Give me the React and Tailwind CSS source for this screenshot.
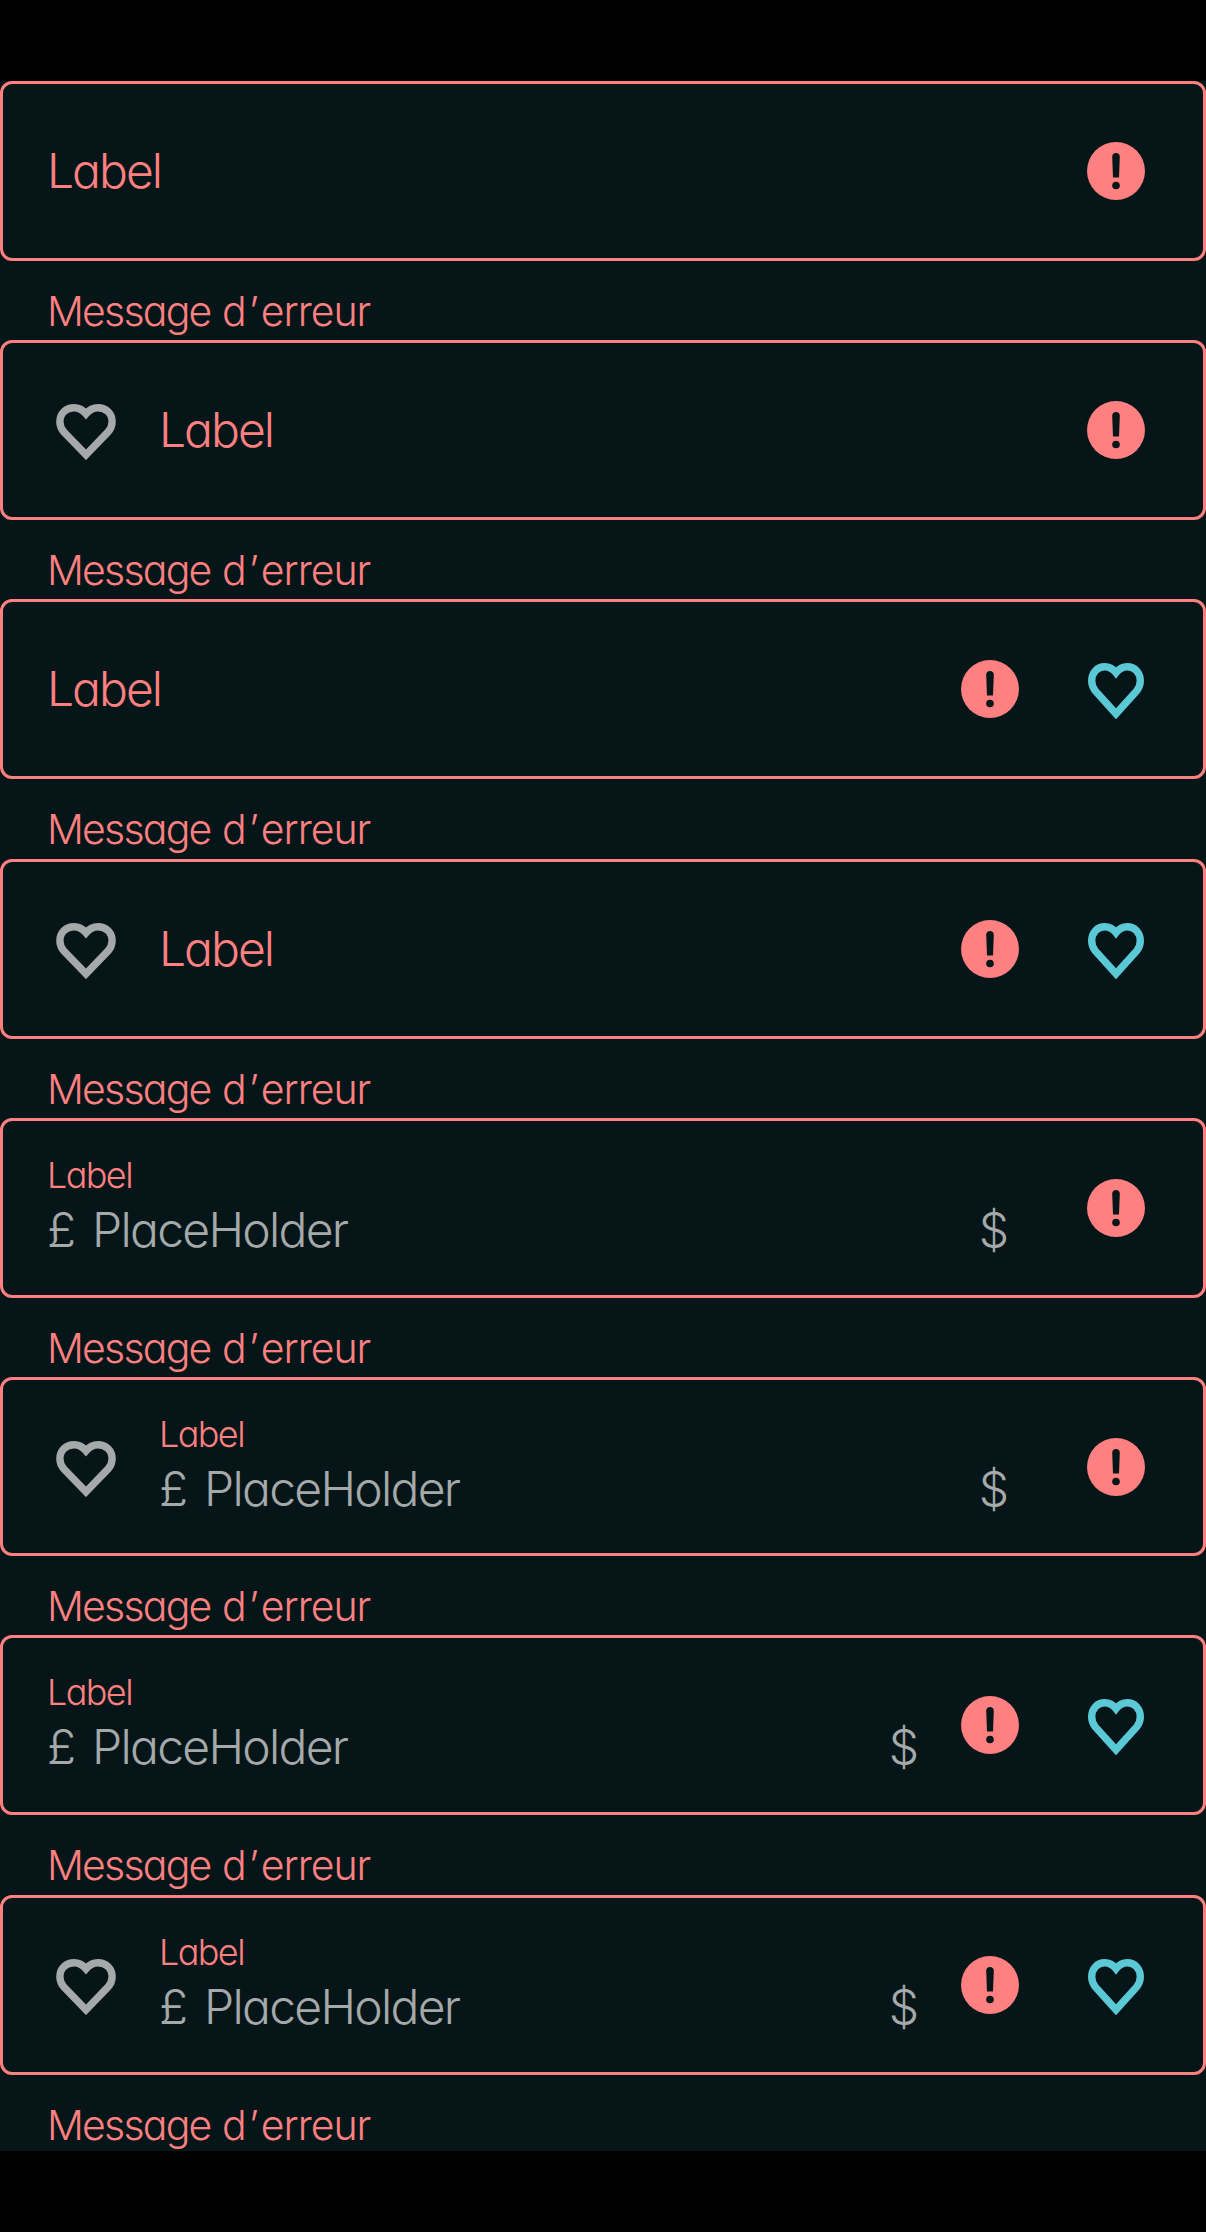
import React from "react";

function Heart({ className, wide }) {
  return (
    <svg className={className} viewBox={wide ? "0 0 60 56" : "0 0 56 56"} fill="none" stroke="currentColor" strokeWidth="7.4">
      {wide ? (
        <path d="M30 9.8C26.8 6 22.8 3.8 18 3.8C10 3.8 3.9 9.6 3.9 17.8C3.9 22 5.2 25 7.9 27.9L30 50.8L52.1 27.9C54.8 25 56.1 22 56.1 17.8C56.1 9.6 50 3.8 42 3.8C37.2 3.8 33.2 6 30 9.8Z" />
      ) : (
        <path d="M28 9.8C25 6 21.3 3.8 16.7 3.8C9.3 3.8 3.7 9.6 3.7 17.8C3.7 22 4.9 25 7.3 27.9L28 50.8L48.7 27.9C51.1 25 52.3 22 52.3 17.8C52.3 9.6 46.7 3.8 39.3 3.8C34.7 3.8 31 6 28 9.8Z" />
      )}
    </svg>
  );
}

function ErrorIcon() {
  return (
    <svg className="h-[58px] w-[58px] shrink-0" viewBox="0 0 58 58">
      <circle cx="29" cy="29" r="29" fill="#ff8080" />
      <path d="M25.2 14.8C25.2 12.5 26.8 10.9 29 10.9C31.2 10.9 32.8 12.5 32.8 14.8L32 35.5H26Z" fill="#051518" />
      <circle cx="29" cy="43.5" r="3.8" fill="#051518" />
    </svg>
  );
}

function Field({ leading, trailing, filled, short, rowClass }) {
  return (
    <div className={rowClass}>
      <div className={`flex items-center rounded-[12px] border-[3px] border-[#ff8080] pr-[58px] ${short ? "h-[179px]" : "h-[180px]"} ${leading ? "pl-[53px]" : "pl-[44px]"}`}>
        {leading && <Heart wide className="mt-1 mr-[43px] h-[56px] w-[60px] shrink-0 text-[#a5a9a9]" />}
        {filled ? (
          <div className="flex h-full grow flex-col pt-[29px]">
            <span className="h-[50px] text-[36px] leading-[50px] tracking-[-1.6px] text-[#ff8080]">Label</span>
            <div className="flex h-[60px] items-center text-[48px] leading-[60px] text-[#a5a9a9]">
              <span className="w-[45px]">£</span>
              <span className="grow tracking-[-1.7px]">PlaceHolder</span>
              <span className={trailing ? "mr-[42px]" : "mr-[78px]"}>$</span>
            </div>
          </div>
        ) : (
          <span className="grow text-[48px] leading-[60px] tracking-[-2px] text-[#ff8080]">Label</span>
        )}
        <ErrorIcon />
        {trailing && <Heart className="mt-1 ml-[69px] mr-px h-[56px] w-[56px] shrink-0 text-[#5bc8d5]" />}
      </div>
      <p className="mt-[23px] h-[50px] pl-[47px] text-[41px] leading-[55px] whitespace-nowrap text-[#ff8080]">
        <span className="tracking-[-1.8px]">Message</span>{" "}
        <span className="tracking-[2px]">d’</span>
        <span className="tracking-[-1px]">erreur</span>
      </p>
    </div>
  );
}

export default function App() {
  return (
    <div className="h-[2232px] w-[1206px] overflow-hidden bg-black pt-[81px] font-['Inter',sans-serif] font-[350] [font-feature-settings:'cv11']">
      <main className="h-[2070px] overflow-hidden bg-[#051518]">
        <Field rowClass="h-[259px]" />
        <Field rowClass="h-[259px]" leading />
        <Field rowClass="h-[260px]" trailing />
        <Field rowClass="h-[259px]" leading trailing />
        <Field rowClass="h-[259px]" filled />
        <Field rowClass="h-[258px]" filled leading short />
        <Field rowClass="h-[260px]" filled trailing />
        <Field rowClass="h-[256px]" filled leading trailing />
      </main>
    </div>
  );
}
